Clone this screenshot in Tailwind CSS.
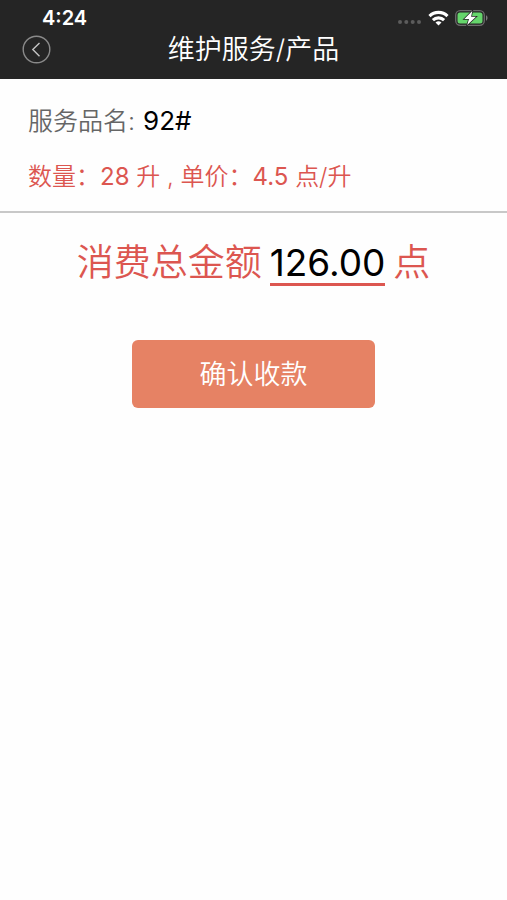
<!DOCTYPE html>
<html lang="zh-CN">
<head>
<meta charset="utf-8">
<meta name="viewport" content="width=device-width, initial-scale=1">
<title>维护服务/产品</title>
<script src="https://cdn.jsdelivr.net/npm/@tailwindcss/browser@4"></script>
</head>
<body class="min-h-screen bg-[#fefefe] font-['Inter','Noto_Sans_CJK_SC',sans-serif] text-black">
<header class="bg-[#252525] text-white">
  <div class="flex h-8 items-center justify-between pt-1 pr-[19px] pl-[42px]">
    <span class="text-[20px] leading-6 font-semibold">4:24</span>
    <div class="flex items-center gap-[6px]">
      <svg class="mt-2 h-1 w-6" viewBox="0 0 24 4" fill="#5c5c5c" aria-hidden="true"><circle cx="2" cy="2" r="2"/><circle cx="8.300" cy="2" r="2"/><circle cx="14.700" cy="2" r="2"/><circle cx="21" cy="2" r="2"/></svg>
      <svg class="h-4 w-[21px]" viewBox="0 0 20 16" fill="none" stroke="#fff" stroke-width="3.100" aria-hidden="true"><path d="M1 6.100a12.800 12.800 0 0 1 18 0"/><path d="M4.400 10.200a8 8 0 0 1 11.200 0"/><path d="M10 15.600l-3-3a4.300 4.300 0 0 1 6 0z" fill="#fff" stroke="none"/></svg>
      <svg class="h-4 w-[33px]" viewBox="0 0 33 16" aria-hidden="true"><rect x=".7" y=".7" width="28.600" height="14.600" rx="4.500" fill="none" stroke="#6c6c6c" stroke-width="1.300"/><rect x="2.500" y="2.500" width="25" height="11" rx="2.500" fill="#65d56b"/><path d="M31 5.300c2 .8 2 4.600 0 5.400z" fill="#7c7c7c"/><path d="M17.300 1L9.300 9h4.700l-1.800 6 8.800-8.200h-4.900z" fill="#fff" stroke="#252525" stroke-width="1.500" paint-order="stroke"/></svg>
    </div>
  </div>
  <div class="grid h-[47px] grid-cols-[1fr_auto_1fr] items-start px-[22px]">
    <button type="button" aria-label="返回" class="mt-[3px] size-[29px]">
      <svg class="size-full" viewBox="0 0 29 29" fill="none" aria-hidden="true"><circle cx="14.500" cy="14.500" r="13.300" stroke="#8a8a8a" stroke-width="1.400"/><path d="M17.500 8L10.800 14.500l6.700 6.700" stroke="#c4c4c4" stroke-width="1.400"/></svg>
    </button>
    <h1 class="mt-0.5 text-[27px] leading-8 font-[350]">维护服务/产品</h1>
  </div>
</header>
<main>
  <section class="border-b-2 border-[#c8c8c8] px-7 pt-6 pb-4">
    <p class="flex items-baseline gap-2 text-[25px] leading-9"><span class="font-[350] text-[#666]">服务品名:</span><span class="text-[26px]">92#</span></p>
    <p class="mt-5 text-[24px] leading-9 font-[350] text-[#dc5650]">数量：<span class="font-normal">28</span> 升 , 单价：<span class="font-normal">4.5</span> 点/升</p>
  </section>
  <section class="flex flex-col items-center pt-[30px]">
    <p class="flex items-baseline gap-2 text-[37px] leading-10 font-[350] text-[#dc5650]"><span>消费总金额</span><span class="border-b-3 border-[#dc5650] font-normal text-black">126.00</span><span>点</span></p>
    <button type="button" class="mt-[54px] h-[68px] w-[48%] rounded-md bg-[#e68264] pt-0.5 text-[27px] font-[350] text-white">确认收款</button>
  </section>
</main>
</body>
</html>
